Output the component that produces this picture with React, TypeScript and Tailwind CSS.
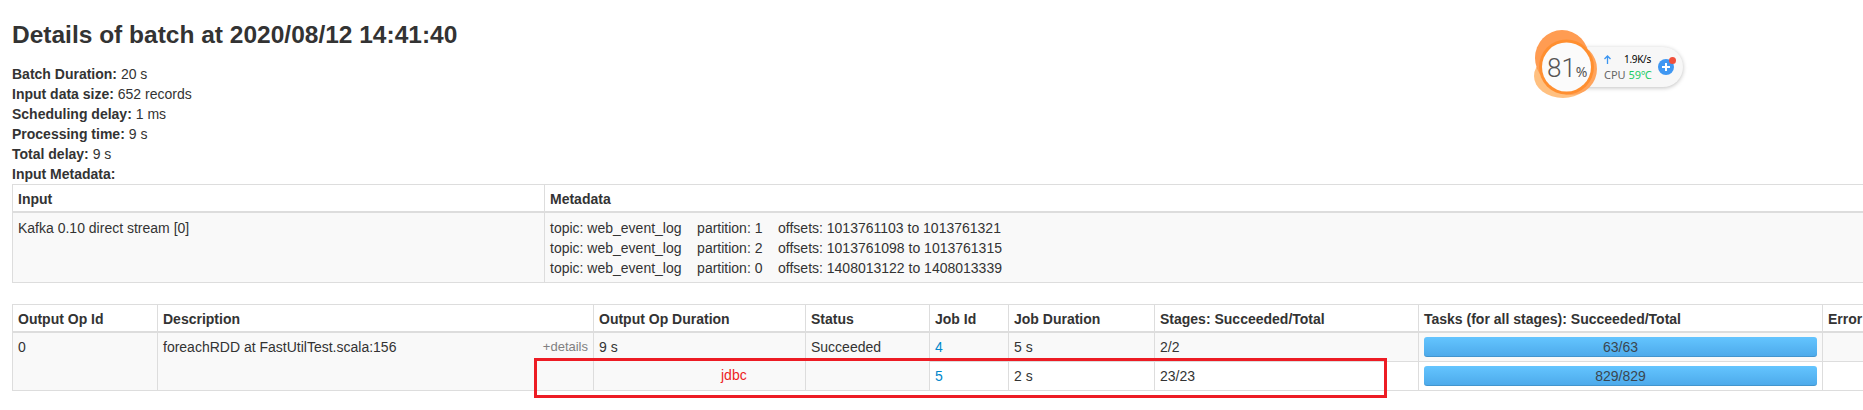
const thCls = "border border-[#ddd] border-b-2 px-[5px] pt-1 pb-[2px] text-left font-bold align-top";
const tdCls = "border border-[#ddd] px-[5px] pt-[5px] pb-1 align-top";
const jobCls = "border border-[#ddd] px-[5px] py-1 align-top";

const summary = [
  ["Batch Duration:", "20 s"],
  ["Input data size:", "652 records"],
  ["Scheduling delay:", "1 ms"],
  ["Processing time:", "9 s"],
  ["Total delay:", "9 s"],
];

const offsets = [
  ["1", "1013761103 to 1013761321"],
  ["2", "1013761098 to 1013761315"],
  ["0", "1408013122 to 1408013339"],
];

const Bar = ({ label }: { label: string }) => (
  <div className="h-5 rounded-[3px] bg-gradient-to-b from-[#64c5ff] to-[#4ca9ea] text-center leading-5 text-[#3a4650] shadow-[inset_0_-1px_0_rgba(0,0,0,0.12)]">
    {label}
  </div>
);

const CpuWidget = () => (
  <div className="absolute left-[1531px] top-[29px] h-[72px] w-[156px] [font-family:'Noto_Sans',sans-serif]">
    <div className="absolute left-[50px] top-[18px] flex h-[40px] w-[102px] items-center rounded-r-[20px] bg-[#f7f7f7] pl-[23px] shadow-[0_1px_4px_rgba(0,0,0,0.25)]">
      <div className="w-[47px] shrink-0">
        <div className="flex items-center justify-between leading-[14px]">
          <svg width="7" height="9" viewBox="0 0 7 9" fill="none" stroke="#3b95f0" strokeWidth="1.3">
            <path d="M3.5 9V1M.5 4l3-3 3 3" />
          </svg>
          <span className="text-[10px] tracking-[-0.3px] text-black">1.9K/s</span>
        </div>
        <div className="mt-[2px] whitespace-nowrap text-[11px] leading-[14px] text-[#666]">
          CPU <span className="text-[#22cc66]">59℃</span>
        </div>
      </div>
      <div className="relative ml-[7px] flex h-4 w-4 shrink-0 items-center justify-center rounded-full bg-[#3f97f2]">
        <svg width="8" height="8" viewBox="0 0 8 8" stroke="#fff" strokeWidth="2">
          <path d="M4 0v8M0 4h8" />
        </svg>
        <span className="absolute -right-[2px] -top-[2px] h-[7px] w-[7px] rounded-full bg-[#f0503c]" />
      </div>
    </div>
    <svg className="absolute left-0 top-0" width="72" height="72" viewBox="0 0 72 72">
      <ellipse cx="32" cy="47" rx="29" ry="22" fill="#ffc080" />
      <ellipse cx="31" cy="29" rx="27" ry="28" fill="#ff9c52" />
      <circle cx="40" cy="40" r="26" fill="#ffa45c" />
      <circle cx="35.5" cy="38" r="27.5" fill="#ff8f30" />
      <circle cx="35.5" cy="38" r="24.5" fill="#fbfbfb" />
    </svg>
    <div className="absolute left-[16px] top-[25px] flex items-baseline text-[#555]">
      <span className="text-[26px] leading-7 font-light [font-family:'Roboto',sans-serif]">81</span>
      <span className="text-[14px] leading-7">%</span>
    </div>
  </div>
);

export default function App() {
  return (
    <div className="relative h-[410px] w-[1863px] overflow-hidden bg-white text-[14px] leading-5 text-[#333] [font-family:'Liberation_Sans',Arial,sans-serif]">
      <div className="pl-3 pt-[21px]">
        <h3 className="m-0 text-[24.5px] leading-[27px] font-bold">Details of batch at 2020/08/12 14:41:40</h3>
        <ul className="mt-4">
          {summary.map(([k, v]) => (
            <li key={k}>
              <strong>{k}</strong> {v}
            </li>
          ))}
          <li>
            <strong>Input Metadata:</strong>
          </li>
        </ul>

        <table className="w-[1900px] table-fixed border-collapse">
          <colgroup>
            <col className="w-[532px]" />
            <col />
          </colgroup>
          <thead>
            <tr>
              <th className={thCls}>Input</th>
              <th className={thCls}>Metadata</th>
            </tr>
          </thead>
          <tbody>
            <tr className="bg-[#f9f9f9]">
              <td className={tdCls}>Kafka 0.10 direct stream [0]</td>
              <td className={tdCls}>
                {offsets.map(([p, o]) => (
                  <div key={p} className="whitespace-pre">
                    {`topic: web_event_log    partition: ${p}    offsets: ${o}`}
                  </div>
                ))}
              </td>
            </tr>
          </tbody>
        </table>

        <table className="mt-[21px] w-[1900px] table-fixed border-collapse">
          <colgroup>
            <col className="w-[145px]" />
            <col className="w-[436px]" />
            <col className="w-[212px]" />
            <col className="w-[124px]" />
            <col className="w-[79px]" />
            <col className="w-[146px]" />
            <col className="w-[264px]" />
            <col className="w-[404px]" />
            <col />
          </colgroup>
          <thead>
            <tr>
              <th className={thCls}>Output Op Id</th>
              <th className={thCls}>Description</th>
              <th className={thCls}>Output Op Duration</th>
              <th className={thCls}>Status</th>
              <th className={thCls}>Job Id</th>
              <th className={thCls}>Job Duration</th>
              <th className={thCls}>Stages: Succeeded/Total</th>
              <th className={thCls}>Tasks (for all stages): Succeeded/Total</th>
              <th className={thCls}>Error</th>
            </tr>
          </thead>
          <tbody>
            <tr className="bg-[#f9f9f9]">
              <td rowSpan={2} className={jobCls}>0</td>
              <td rowSpan={2} className={jobCls}>
                <div className="flex justify-between">
                  <span>foreachRDD at FastUtilTest.scala:156</span>
                  <span className="text-[13px] text-[#808080]">+details</span>
                </div>
              </td>
              <td rowSpan={2} className={jobCls}>9 s</td>
              <td rowSpan={2} className={jobCls}>Succeeded</td>
              <td className={jobCls}><a className="text-[#0088cc]">4</a></td>
              <td className={jobCls}>5 s</td>
              <td className={jobCls}>2/2</td>
              <td className={jobCls}><Bar label="63/63" /></td>
              <td className={jobCls} />
            </tr>
            <tr>
              <td className={jobCls}><a className="text-[#0088cc]">5</a></td>
              <td className={jobCls}>2 s</td>
              <td className={jobCls}>23/23</td>
              <td className={jobCls}><Bar label="829/829" /></td>
              <td className={jobCls} />
            </tr>
          </tbody>
        </table>
      </div>

      <CpuWidget />

      {/* hand drawn note on top of the screenshot */}
      <div className="absolute left-[534px] top-[358px] h-10 w-[853px] border-[3px] border-[#ed1c24]" />
      <span className="absolute left-[721px] top-[365px] text-[#ed1c24]">jdbc</span>
    </div>
  );
}
